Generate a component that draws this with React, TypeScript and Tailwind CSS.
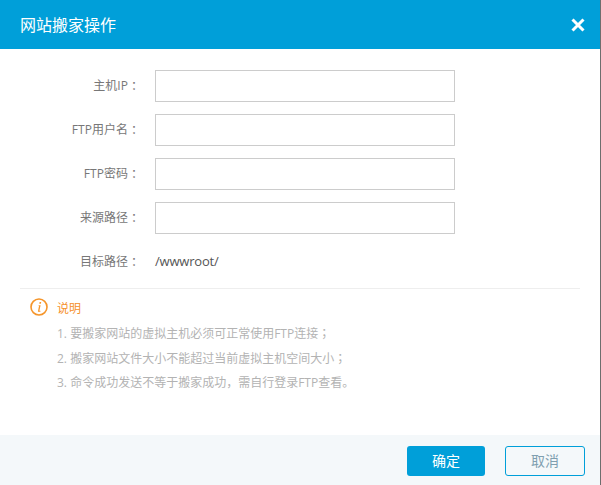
function Row({ label }: { label: string }) {
  return (
    <div className="flex h-8 items-center">
      <label className="w-[123px] text-right text-xs text-[#777777]">{label}</label>
      <input className="ml-3 h-8 w-[300px] border border-[#cccccc] bg-white" />
    </div>
  );
}

export default function App() {
  return (
    <div className="flex h-[485px] w-[601px] flex-col border-r border-[#6e6e6e] bg-white font-['Open_Sans','Noto_Sans_CJK_SC',sans-serif]">
      <header className="flex h-[49px] shrink-0 items-center justify-between bg-[#009fd9] pl-5 pr-[14px]">
        <h1 className="text-base font-normal text-white">网站搬家操作</h1>
        <svg width="16" height="16" viewBox="0 0 16 16" className="mt-[1px]">
          <path d="M2.5 2.5 L13.5 13.5 M13.5 2.5 L2.5 13.5" stroke="#ffffff" strokeWidth="3" fill="none" />
        </svg>
      </header>

      <main className="flex-1 px-5 pt-[21px]">
        <form className="flex flex-col gap-3">
          <Row label="主机IP ：" />
          <Row label="FTP用户名 ：" />
          <Row label="FTP密码 ：" />
          <Row label="来源路径 ：" />
          <div className="flex h-8 items-center">
            <span className="w-[123px] text-right text-xs text-[#777777]">目标路径 ：</span>
            <span className="ml-3 text-[13px] tracking-[-0.2px] text-[#555555]">/wwwroot/</span>
          </div>
        </form>

        <div className="mt-[10px] border-t border-[#eeeeee] pl-[10px] pt-[9px]">
          <div className="flex h-[18px] items-center gap-[9px]">
            <svg width="18" height="18" viewBox="0 0 18 18" className="shrink-0">
              <circle cx="9" cy="9" r="8" stroke="#f5952a" strokeWidth="1.6" fill="none" />
              <path d="M9.6 4h1.6l-.3 1.7H9.3zM9 7.2h1.6L9.4 12.8h1v.9H7.9l1.1-5.6H8.2z" fill="#f5952a" />
            </svg>
            <span className="mt-[3px] text-xs text-[#f58f2a]">说明</span>
          </div>
          <ol className="mt-[5px] pl-[27px] text-xs leading-6 text-[#b3b3b3]">
            <li>1. 要搬家网站的虚拟主机必须可正常使用FTP连接<span className="font-['Noto_Sans_CJK_TC',sans-serif]">；</span></li>
            <li>2. 搬家网站文件大小不能超过当前虚拟主机空间大小<span className="font-['Noto_Sans_CJK_TC',sans-serif]">；</span></li>
            <li>3. 命令成功发送不等于搬家成功，需自行登录FTP查看。</li>
          </ol>
        </div>
      </main>

      <footer className="flex h-[50px] shrink-0 justify-end gap-5 bg-[#f4f8fa] pr-[15px] pt-[11px]">
        <button className="h-[30px] w-[78px] rounded-[3px] bg-[#009fd9] text-sm text-white">确定</button>
        <button className="h-[30px] w-20 rounded-[3px] border border-[#009fd9] text-sm text-[#7f9fb0]">取消</button>
      </footer>
    </div>
  );
}
